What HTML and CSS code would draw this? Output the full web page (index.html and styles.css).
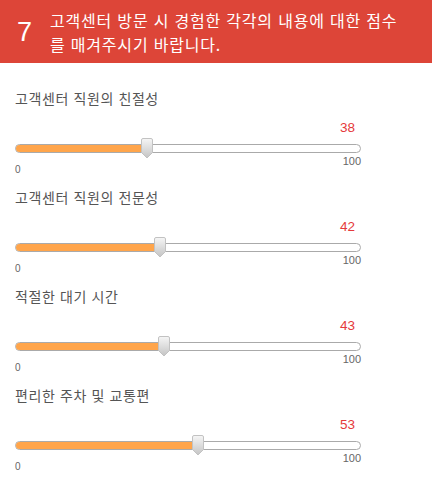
FILE: index.html
```html
<!DOCTYPE html>
<html lang="ko">
<head>
  <meta charset="UTF-8">
  <meta name="viewport" content="width=device-width, initial-scale=1.0">
  <title>고객센터 설문</title>
  <link rel="stylesheet" href="styles.css">
</head>
<body>
  <!-- 질문 헤더 -->
  <div class="question">
    <div class="question-no">7</div>
    <div class="question-text">고객센터 방문 시 경험한 각각의 내용에 대한 점수를 매겨주시기 바랍니다.</div>
  </div>

  <div class="items">
    <div class="item">
      <div class="item-label">고객센터 직원의 친절성</div>
      <div class="item-value">38</div>
      <div class="track">
        <div class="fill" style="width: 38%"></div>
        <svg class="handle" style="left: calc(38% - 6px)" width="12" height="21" viewBox="0 0 12 21">
          <use href="#handle-shape"></use>
        </svg>
      </div>
      <div class="scale-max">100</div>
      <div class="scale-min">0</div>
    </div>

    <div class="item">
      <div class="item-label">고객센터 직원의 전문성</div>
      <div class="item-value">42</div>
      <div class="track">
        <div class="fill" style="width: 42%"></div>
        <svg class="handle" style="left: calc(42% - 6px)" width="12" height="21" viewBox="0 0 12 21">
          <use href="#handle-shape"></use>
        </svg>
      </div>
      <div class="scale-max">100</div>
      <div class="scale-min">0</div>
    </div>

    <div class="item">
      <div class="item-label">적절한 대기 시간</div>
      <div class="item-value">43</div>
      <div class="track">
        <div class="fill" style="width: 43%"></div>
        <svg class="handle" style="left: calc(43% - 6px)" width="12" height="21" viewBox="0 0 12 21">
          <use href="#handle-shape"></use>
        </svg>
      </div>
      <div class="scale-max">100</div>
      <div class="scale-min">0</div>
    </div>

    <div class="item">
      <div class="item-label">편리한 주차 및 교통편</div>
      <div class="item-value">53</div>
      <div class="track">
        <div class="fill" style="width: 53%"></div>
        <svg class="handle" style="left: calc(53% - 6px)" width="12" height="21" viewBox="0 0 12 21">
          <use href="#handle-shape"></use>
        </svg>
      </div>
      <div class="scale-max">100</div>
      <div class="scale-min">0</div>
    </div>
  </div>

  <!-- 슬라이더 핸들 모양 -->
  <svg width="0" height="0" class="defs">
    <defs>
      <linearGradient id="handle-grad" x1="0" y1="0" x2="0" y2="1">
        <stop offset="0" stop-color="#f6f6f6"/>
        <stop offset="1" stop-color="#c4c4c4"/>
      </linearGradient>
      <path id="handle-shape" d="M0.5,2 Q0.5,0.5 2,0.5 H10 Q11.5,0.5 11.5,2 V14.5 L6,20 L0.5,14.5 Z" fill="url(#handle-grad)" stroke="#c2c2c2" stroke-width="1"/>
    </defs>
  </svg>
</body>
</html>
```

FILE: styles.css
```css
/* 기본 */
body {
  margin: 0;
  font-family: 'Noto Sans CJK KR', 'Liberation Sans', sans-serif;
  background-color: #fff;
  color: #555;
}

/* 질문 헤더 */
.question {
  display: flex;
  align-items: center;
  background-color: #dd4538;
  color: #fff;
  padding: 8px 30px 7px 17px;
}

.question-no {
  width: 33px;
  flex-shrink: 0;
  font-family: 'Liberation Sans', sans-serif;
  font-size: 27px;
  line-height: 30px;
}

.question-text {
  font-size: 16px;
  line-height: 24px;
  letter-spacing: 0.8px;
}

/* 항목 목록 */
.items {
  padding: 25px 0 0 15px;
}

.item {
  width: 346px;
  margin-bottom: 12px;
}

.item-label {
  font-size: 14px;
  line-height: 20px;
  letter-spacing: 0.6px;
  color: #555;
}

.item-value {
  margin-top: 12px;
  padding-right: 6px;
  text-align: right;
  font-family: 'Liberation Sans', sans-serif;
  font-size: 13.5px;
  line-height: 15px;
  color: #e5393b;
}

/* 슬라이더 */
.track {
  position: relative;
  margin-top: 9px;
  height: 7px;
  border: 1px solid #aaa;
  border-radius: 5px;
  background-color: #fff;
}

.fill {
  height: 100%;
  border-radius: 4px 0 0 4px;
  background-color: #ffa54b;
}

.handle {
  position: absolute;
  top: -7px;
  display: block;
}

.scale-max {
  margin-top: 3px;
  text-align: right;
  font-family: 'Liberation Sans', sans-serif;
  font-size: 11px;
  line-height: 11px;
  color: #666;
}

.scale-min {
  margin-top: -2px;
  font-family: 'Liberation Sans', sans-serif;
  font-size: 10px;
  line-height: 10px;
  color: #666;
}

.defs {
  position: absolute;
}
```
